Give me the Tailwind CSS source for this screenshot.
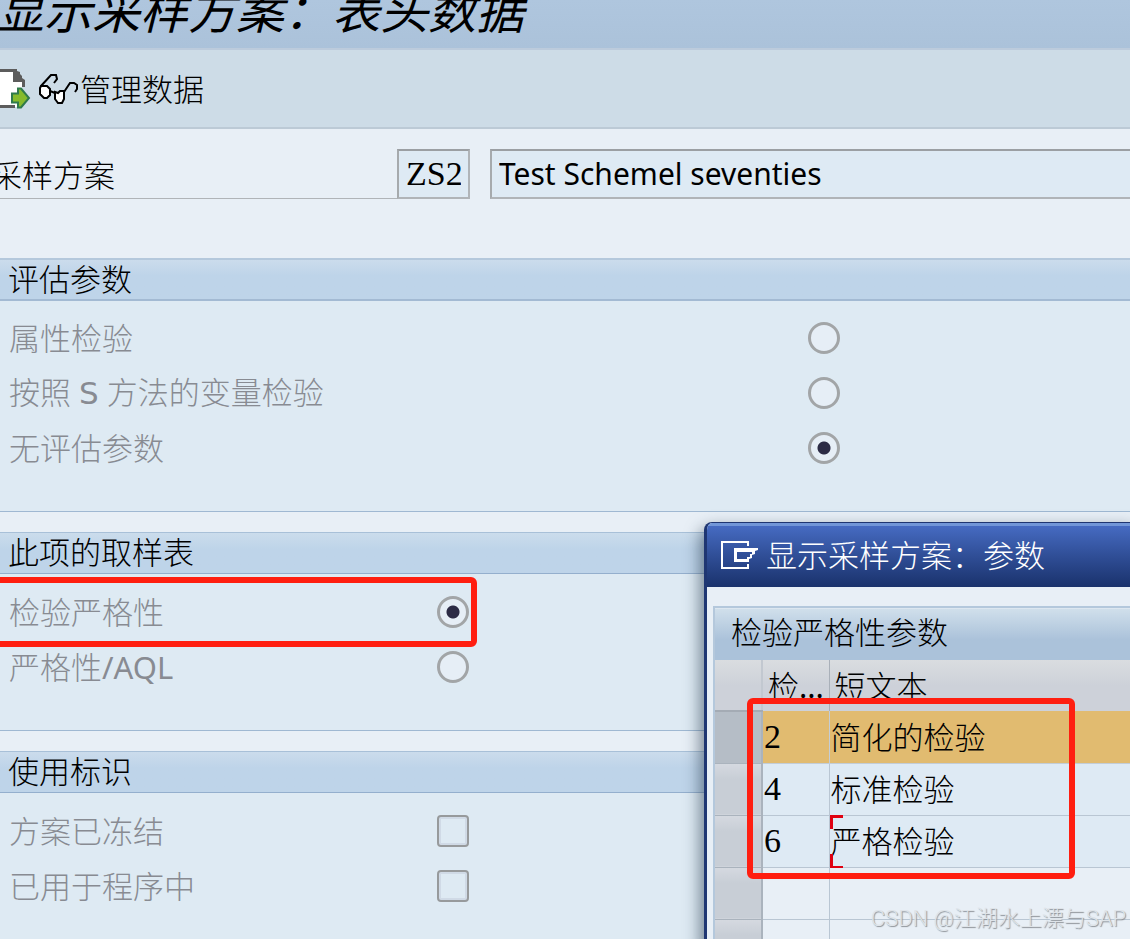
<!DOCTYPE html>
<html lang="zh-CN">
<head>
  <meta charset="UTF-8" />
  <meta name="viewport" content="width=device-width, initial-scale=1" />
  <title>显示采样方案：表头数据</title>
  <script src="https://cdn.jsdelivr.net/npm/@tailwindcss/browser@4"></script>
</head>
<body class="bg-[#e8eff6] text-black font-light text-[31px] leading-[42px] font-['Noto_Sans','Noto_Sans_CJK_SC',sans-serif]">
<div class="relative flex flex-col min-h-screen overflow-hidden">

  <!-- Title bar -->
  <header class="h-[50px] overflow-hidden bg-linear-to-b from-[#afc6de] to-[#abc2da] border-b-2 border-[#bccbdc]">
    <h1 class="-mt-[21px] -ml-1 text-[48px] leading-[64px] font-normal italic whitespace-nowrap">显示采样方案：表头数据</h1>
  </header>

  <!-- Toolbar -->
  <nav class="flex items-center h-[79px] bg-[#cddce7] border-b-2 border-[#bccad6]">
    <button type="button" aria-label="继续" class="shrink-0">
      <svg class="w-[31px] h-[40px]" viewBox="0 0 31 40">
        <path d="M0 2h13l9 10v26H0z" fill="#fff" />
        <path d="M0 1.500h14M23.500 12v6M0 37.500h15" stroke="#5c5c5c" stroke-width="3" fill="none" />
        <path d="M13 0h4v2l3 1v2l2 2v2l3 2v2H13z" fill="#5c5c5c" />
        <path d="M12 24.500h6v-5h3l8 9.500-8 9.500h-3v-5h-6z" fill="#86bb2c" stroke="#2f7a4c" stroke-width="2" />
      </svg>
    </button>
    <button type="button" class="flex items-center ml-[7px] whitespace-nowrap">
      <svg class="w-[42px] h-[36px]" viewBox="0 0 42 36" fill="none" stroke="#000" stroke-width="2">
        <path d="M3 15l-1 2v6l4 4h3l3-3v-6l-3-3z" fill="#fff" />
        <path d="M17 21v7l3 4h4l2-4v-8h-4l-2 2z" fill="#fff" />
        <path d="M16 12l3-4-1-4h-5L3 15M12 20l5 2M26 21l6-9h4l3 2v4l-2 3" />
      </svg>
      管理数据
    </button>
  </nav>

  <main class="flex flex-1 flex-col">
    <!-- Sampling scheme -->
    <div class="flex h-[50px] mt-5">
      <label for="scheme" class="w-[397px] shrink-0 pt-[5px] border-b border-[#b0b4b8] whitespace-nowrap"><span class="-ml-[9px]">采样方案</span></label>
      <input id="scheme" type="text" value="ZS2" readonly class="w-[73px] shrink-0 px-[7px] bg-[#deeaf4] border-2 border-t-[#9b9fa3] border-l-[#a6aaad] border-r-[#b0b4b8] border-b-[#b0b4b8] text-[34px] font-['Liberation_Serif',serif]" />
      <input aria-label="描述" type="text" value="Test Schemel seventies" readonly class="flex-1 min-w-0 ml-5 px-[7px] bg-[#deeaf4] border-2 border-r-0 border-t-[#9b9fa3] border-l-[#a6aaad] border-b-[#b0b4b8] font-normal text-[30px]" />
    </div>

    <!-- Evaluation parameters -->
    <section class="mt-[59px] pb-[36px] bg-[#deeaf3] border-b border-[#9fb8d2]">
      <h2 class="h-[43px] pl-2 leading-[38px] bg-linear-to-b from-[#cbdcec] to-[#bed4e9] to-40% border-t-2 border-t-[#b4c8dc] border-b-2 border-b-[#a3bad3]">评估参数</h2>
      <div class="pt-[9px] text-[#888b92]">
        <div class="flex items-center h-[55px] pl-[9px]">
          <label for="attr" class="w-[799px]">属性检验</label>
          <input id="attr" type="radio" name="valuation" disabled class="appearance-none size-8 rounded-full border-3 border-[#a2a5a7] bg-[#e6eef6]" />
        </div>
        <div class="flex items-center h-[55px] pl-[9px]">
          <label for="var" class="w-[799px]">按照 <span class="font-normal font-['DejaVu_Sans']">S</span> 方法的变量检验</label>
          <input id="var" type="radio" name="valuation" disabled class="appearance-none size-8 rounded-full border-3 border-[#a2a5a7] bg-[#e6eef6]" />
        </div>
        <div class="flex items-center h-[55px] pl-[9px]">
          <label for="none" class="w-[799px]">无评估参数</label>
          <input id="none" type="radio" name="valuation" checked disabled class="appearance-none size-8 rounded-full border-3 border-[#a2a5a7] bg-[radial-gradient(circle,#2c2b45_6px,#e6eef6_7px)]" />
        </div>
      </div>
    </section>

    <!-- Sampling tables -->
    <section class="mt-5 pb-[36px] bg-[#deeaf3] border-b border-[#9fb8d2]">
      <h2 class="h-[42px] pl-2 leading-[38px] bg-linear-to-b from-[#cbdcec] to-[#bed4e9] to-40% border-t border-t-[#a8c0d8] border-b border-b-[#94afcd]">此项的取样表</h2>
      <div class="pt-[10px] text-[#888b92]">
        <div class="relative flex items-center h-[55px] pl-[9px]">
          <label for="severity" class="w-[428px]">检验严格性</label>
          <input id="severity" type="radio" name="table" checked disabled class="appearance-none size-8 rounded-full border-3 border-[#a2a5a7] bg-[radial-gradient(circle,#2c2b45_6px,#e6eef6_7px)]" />
          <div class="absolute -left-2 -top-[7px] w-[485px] h-[70px] border-6 border-[#ff1e10] rounded-md"></div>
        </div>
        <div class="flex items-center h-[55px] pl-[9px]">
          <label for="aql" class="w-[428px]">严格性<span class="font-normal">/AQL</span></label>
          <input id="aql" type="radio" name="table" disabled class="appearance-none size-8 rounded-full border-3 border-[#a2a5a7] bg-[#e6eef6]" />
        </div>
      </div>
    </section>

    <!-- Usage indicator -->
    <section class="flex-1 mt-5 pb-6 bg-[#deeaf3]">
      <h2 class="h-[42px] pl-2 leading-[38px] bg-linear-to-b from-[#cbdcec] to-[#bed4e9] to-40% border-t border-t-[#a8c0d8] border-b border-b-[#94afcd]">使用标识</h2>
      <div class="pt-[10px] text-[#888b92]">
        <div class="flex items-center h-[55px] pl-[9px]">
          <label for="blocked" class="w-[428px]">方案已冻结</label>
          <input id="blocked" type="checkbox" disabled class="appearance-none size-8 rounded-sm border-2 border-[#979a9c] bg-[#deeaf3] shadow-[inset_0_0_0_2px_#d0dae6]" />
        </div>
        <div class="flex items-center h-[55px] pl-[9px]">
          <label for="used" class="w-[428px]">已用于程序中</label>
          <input id="used" type="checkbox" disabled class="appearance-none size-8 rounded-sm border-2 border-[#979a9c] bg-[#deeaf3] shadow-[inset_0_0_0_2px_#d0dae6]" />
        </div>
      </div>
    </section>
  </main>

  <!-- Parameter dialog -->
  <div role="dialog" aria-labelledby="dialog-title" class="absolute left-[704px] right-0 top-[522px] bottom-0 overflow-hidden rounded-tl-lg border-l-3 border-t border-[#1f3672] bg-[#e8eff6] shadow-[0_10px_16px_4px_rgba(40,60,80,0.6)]">
    <div class="flex items-center h-[64px] pl-[14px] pb-1 bg-linear-to-b from-[#466bc2] to-[#1a326c] border-t-3 border-[#7196d8] text-white">
      <svg class="shrink-0 w-[38px] h-[28px] mr-[7px]" viewBox="0 0 38 28" fill="none" stroke="#fff">
        <path d="M27 5V1H1v26h26v-4" stroke-width="2" />
        <path d="M13 7h24v2l-3 1v3l-3 1v3l-3 1v3H13zM16 11v7h10v-2h3v-3h2v-2z" fill="#fff" fill-rule="evenodd" stroke="none" />
      </svg>
      <h2 id="dialog-title" class="whitespace-nowrap">显示采样方案：参数</h2>
    </div>

    <div class="relative mt-[19px] ml-[6px] border-t-2 border-l-2 border-[#b4c8dc]">
      <h3 class="h-[52px] pl-4 leading-[46px] bg-linear-to-b from-[#d0dfeb] to-[#abc2da] to-60% border-t border-white/60">检验严格性参数</h3>
      <table class="w-full table-fixed border-collapse text-left whitespace-nowrap">
        <colgroup>
          <col class="w-[47px]" />
          <col class="w-[67px]" />
          <col />
        </colgroup>
        <thead>
          <tr class="h-[51px] bg-linear-to-b from-[#dadde0] to-[#cdd1d9] to-50%">
            <th class="border-r-2 border-b-2 border-r-[#c2c8d0] border-b-[#a4abb4]"></th>
            <th class="p-0 pl-[5px] font-light overflow-hidden border-r border-[#a9b0b9]">检<span class="font-normal">...</span></th>
            <th class="p-0 pl-[5px] font-light">短文本</th>
          </tr>
        </thead>
        <tbody class="bg-[#deeaf4]">
          <tr class="h-[52px] bg-[#e1bb70]">
            <td class="bg-[#b5bdc6] border-r-2 border-b border-[#aab3bd]"></td>
            <td class="p-0 pl-px border-r border-b border-[#c3cdd7] text-[34px] font-['Liberation_Serif',serif]">2</td>
            <td class="p-0 pl-px border-b border-[#c3cdd7]">简化的检验</td>
          </tr>
          <tr class="h-[52px]">
            <td class="bg-linear-to-b from-[#d5d9e0] to-[#c8ced6] to-30% border-r-2 border-b border-[#aab3bd]"></td>
            <td class="p-0 pl-px border-r border-b border-[#b9c6d3] text-[34px] font-['Liberation_Serif',serif]">4</td>
            <td class="p-0 pl-px border-b border-[#b9c6d3]">标准检验</td>
          </tr>
          <tr class="h-[52px]">
            <td class="bg-linear-to-b from-[#d5d9e0] to-[#c8ced6] to-30% border-r-2 border-b border-[#aab3bd]"></td>
            <td class="p-0 pl-px border-r border-b border-[#b9c6d3] text-[34px] font-['Liberation_Serif',serif]">6</td>
            <td class="relative p-0 pl-px border-b border-[#b9c6d3]">
              严格检验
              <span class="absolute left-0 -top-px w-[13px] h-[14px] border-t-3 border-l-3 border-[#e00010]"></span>
              <span class="absolute left-0 -bottom-px w-[13px] h-[14px] border-b-2 border-l-3 border-[#e00010]"></span>
            </td>
          </tr>
          <tr class="h-[52px] bg-[#e8eff6]">
            <td class="bg-linear-to-b from-[#d5d9e0] to-[#c8ced6] to-30% border-r-2 border-b border-[#aab3bd]"></td>
            <td class="border-r border-b border-[#b9c6d3]"></td>
            <td class="border-b border-[#b9c6d3]"></td>
          </tr>
          <tr class="h-[52px] bg-[#e8eff6]">
            <td class="bg-linear-to-b from-[#d5d9e0] to-[#c8ced6] to-30% border-r-2 border-[#aab3bd]"></td>
            <td class="border-r border-[#b9c6d3]"></td>
            <td></td>
          </tr>
        </tbody>
      </table>
      <div class="absolute left-8 top-[90px] w-[328px] h-[181px] border-6 border-[#ff1e10] rounded-md"></div>
    </div>
  </div>

  <!-- Watermark -->
  <p class="absolute right-1 bottom-1 text-[22px] leading-8 whitespace-nowrap text-[#dfe4e9] [text-shadow:1px_1px_1px_#8b9096] font-['Roboto','Noto_Sans_CJK_SC',sans-serif]">CSDN @江湖水上漂与SAP</p>

</div>
</body>
</html>
